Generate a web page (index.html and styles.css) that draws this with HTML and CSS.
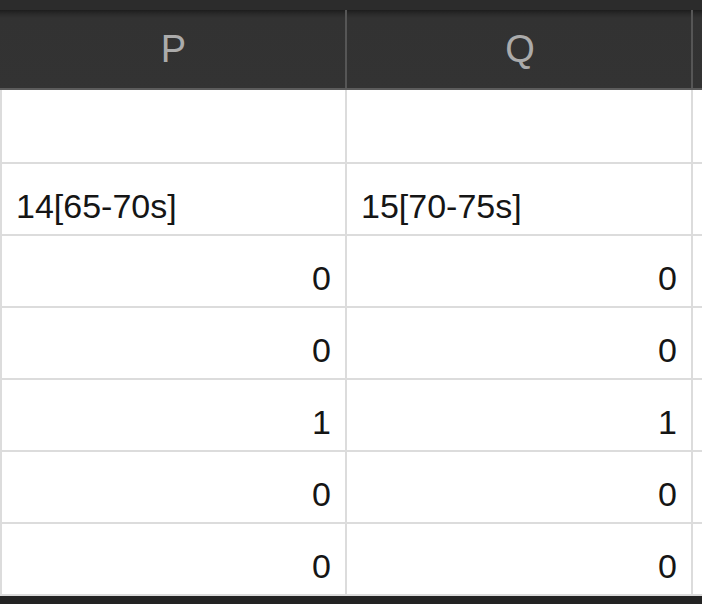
FILE: index.html
```html
<!DOCTYPE html>
<html>
<head>
<meta charset="utf-8">
<link rel="stylesheet" href="styles.css">
</head>
<body>
<div class="topbar"></div>
<div class="sheet">
  <div class="hd">P</div>
  <div class="hd">Q</div>
  <div class="hd edge"></div>

  <div class="cell tall"></div>
  <div class="cell tall"></div>
  <div class="cell tall"></div>

  <div class="cell">14[65-70s]</div>
  <div class="cell">15[70-75s]</div>
  <div class="cell"></div>

  <div class="cell num">0</div>
  <div class="cell num">0</div>
  <div class="cell"></div>

  <div class="cell num">0</div>
  <div class="cell num">0</div>
  <div class="cell"></div>

  <div class="cell num">1</div>
  <div class="cell num">1</div>
  <div class="cell"></div>

  <div class="cell num">0</div>
  <div class="cell num">0</div>
  <div class="cell"></div>

  <div class="cell num">0</div>
  <div class="cell num">0</div>
  <div class="cell"></div>
</div>
</body>
</html>
```
FILE: styles.css
```css
html, body {
  margin: 0;
  padding: 0;
  width: 702px;
  height: 604px;
  overflow: hidden;
  background: #232323;
  font-family: "Liberation Sans", Arial, Helvetica, sans-serif;
}
.topbar {
  height: 10px;
  background: #2c2c2c;
}
.sheet {
  display: grid;
  grid-template-columns: 343px 344px 9px;
  grid-auto-rows: 70px;
  grid-template-rows: 78px 72px;
  row-gap: 2px;
  column-gap: 2px;
  background: #dcdcdc;
  padding-left: 2px;
  padding-bottom: 2px;
  width: 700px;
  overflow: hidden;
}
.hd {
  background: linear-gradient(#1d1d1d 0, #2a2a2a 4px, #323232 8px, #333 100%);
  border-bottom: 2px solid #5c5c5c;
  color: #ababab;
  font-size: 38px;
  display: flex;
  align-items: center;
  justify-content: center;
  margin-left: -2px;
  margin-right: -2px;
  margin-bottom: -2px;
  box-shadow: inset 2px 0 0 #565656;
  padding-left: 2px;
}
.hd:first-child {
  box-shadow: none;
  padding-left: 0;
}
.cell {
  background: #fff;
  color: #151515;
  font-size: 34px;
  line-height: 1;
  display: flex;
  align-items: flex-end;
  padding: 0 13px 11px 14px;
}
.num {
  justify-content: flex-end;
  padding-right: 14px;
}
```
